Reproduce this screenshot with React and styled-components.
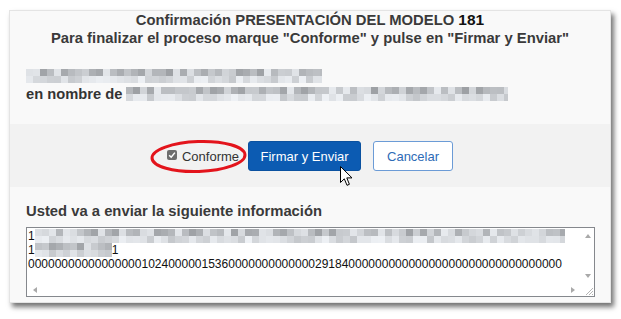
import React from 'react';
import styled, { createGlobalStyle } from 'styled-components';

const GlobalStyle = createGlobalStyle`
  html, body {
    margin: 0;
    padding: 0;
    background: #fff;
  }
  body {
    font-family: "Liberation Sans", Arial, sans-serif;
  }
`;

const Page = styled.div`
  width: 621px;
  height: 319px;
  padding: 10px 0 0 9px;
  box-sizing: border-box;
`;

const Card = styled.div`
  width: 602px;
  height: 293px;
  box-sizing: border-box;
  background: #f9f9f9;
  border: 1px solid #e4e4e4;
  box-shadow: 3px 4px 5px rgba(0, 0, 0, 0.55);
  display: flex;
  flex-direction: column;
`;

const Header = styled.div`
  text-align: center;
  font-size: 14.8px;
  font-weight: 700;
  line-height: 18px;
  color: #3a3a3a;
`;

const Number = styled.span`
  color: #111;
  font-size: 15.5px;
`;

const Identity = styled.div`
  padding: 20px 16px 21px;
`;

const Line = styled.div`
  display: flex;
  align-items: center;
  height: 18px;
  font-size: 14.7px;
  font-weight: 700;
  color: #333;
  white-space: nowrap;
`;

const PixelBlock = styled.div`
  display: flex;
  flex-direction: column;
  flex: none;
  overflow: hidden;
`;

const PixelRow = styled.div`
  display: flex;
  height: ${(p) => p.$cell}px;
`;

const Cell = styled.span`
  display: block;
  width: ${(p) => p.$cell}px;
  height: 100%;
  flex: none;
`;

const Band = styled.div`
  background: #f2f2f2;
  padding: 17px 0 16px;
  display: flex;
  justify-content: center;
  align-items: center;
`;

const ConformeLabel = styled.label`
  position: relative;
  display: flex;
  align-items: center;
  height: 30px;
  margin-right: 9px;
  font-size: 13px;
  color: #333;
`;

const CheckBox = styled.span`
  width: 10px;
  height: 10px;
  border-radius: 2px;
  background: #6d6d6d;
  margin: 0 5px 3px 0;
  display: flex;
  align-items: center;
  justify-content: center;
`;

const Ring = styled.svg`
  position: absolute;
  left: -17px;
  top: -1px;
  overflow: visible;
  pointer-events: none;
`;

const Button = styled.button`
  position: relative;
  height: 30px;
  width: ${(p) => p.$w}px;
  box-sizing: border-box;
  border-radius: 3px;
  font-family: "Liberation Sans", Arial, sans-serif;
  font-size: 13px;
  padding: 0;
  margin-right: ${(p) => p.$mr || 0}px;
  background: ${(p) => (p.$primary ? '#0c5bb2' : '#fff')};
  color: ${(p) => (p.$primary ? '#fff' : '#2e6bb6')};
  border: 1px solid ${(p) => (p.$primary ? '#0a51a0' : '#6b9bd6')};
`;

const Cursor = styled.svg`
  position: absolute;
  left: 91px;
  top: 24px;
  overflow: visible;
`;

const Info = styled.div`
  padding: 15px 16px 0;
`;

const InfoTitle = styled.div`
  font-size: 14.8px;
  font-weight: 700;
  line-height: 18px;
  color: #3a3a3a;
`;

const TextBox = styled.div`
  margin-top: 7px;
  width: 569px;
  height: 70px;
  box-sizing: border-box;
  border: 1px solid #85888d;
  background: #fff;
  display: grid;
  grid-template-columns: 1fr 13px;
  grid-template-rows: 1fr 13px;
`;

const TextContent = styled.div`
  padding: 1px 0 0 1px;
  overflow: hidden;
  font-size: 12px;
  line-height: 14px;
  color: #111;
  white-space: nowrap;
`;

const TextLine = styled.div`
  display: flex;
  align-items: center;
  height: 14px;
`;

const VScroll = styled.div`
  display: flex;
  flex-direction: column;
  justify-content: space-between;
  align-items: center;
  padding: 6px 0 5px;
`;

const HScroll = styled.div`
  display: flex;
  justify-content: space-between;
  align-items: center;
  padding: 0 6px 0 6px;
`;

const Arrow = styled.span`
  width: 0;
  height: 0;
  border: 3px solid transparent;
  ${(p) => p.$dir === 'up' && 'border-bottom: 4px solid #a9a9a9; border-top-width: 0;'}
  ${(p) => p.$dir === 'down' && 'border-top: 4px solid #a9a9a9; border-bottom-width: 0;'}
  ${(p) => p.$dir === 'left' && 'border-right: 4px solid #a9a9a9; border-left-width: 0;'}
  ${(p) => p.$dir === 'right' && 'border-left: 4px solid #a9a9a9; border-right-width: 0;'}
`;

const Grip = styled.div`
  display: flex;
  align-items: flex-end;
  justify-content: flex-end;
`;

// deterministic grey blocks standing in for the pixelated private data
const makeCells = (seed, cols, rows) => {
  let s = seed;
  const rnd = () => {
    s = (s * 9301 + 49297) % 233280;
    return s / 233280;
  };
  const out = [];
  for (let r = 0; r < rows; r++) {
    const row = [];
    for (let c = 0; c < cols; c++) {
      const v = rnd();
      const base = r === 0 ? 160 + v * 75 : 200 + v * 42;
      const g = Math.round(base);
      row.push(`rgb(${g - 4}, ${g - 1}, ${g + 3})`);
    }
    out.push(row);
  }
  return out;
};

const Pixelated = ({ width, seed, cell = 7, rows = 2 }) => {
  const cells = makeCells(seed, Math.ceil(width / cell), rows);
  return (
    <PixelBlock style={{ width }}>
      {cells.map((row, i) => (
        <PixelRow key={i} $cell={cell}>
          {row.map((c, j) => (
            <Cell key={j} $cell={cell} style={{ background: c }} />
          ))}
        </PixelRow>
      ))}
    </PixelBlock>
  );
};

const digits =
  '0'.repeat(17) + '1024' + '0'.repeat(5) + '1536' + '0'.repeat(13) + '29184' + '0'.repeat(32);

export default function App() {
  return (
    <>
      <GlobalStyle />
      <Page>
        <Card>
          <Header>
            <div>
              Confirmación PRESENTACIÓN DEL MODELO <Number>181</Number>
            </div>
            <div>Para finalizar el proceso marque "Conforme" y pulse en "Firmar y Enviar"</div>
          </Header>

          <Identity>
            <Line>
              <Pixelated width={296} seed={17} />
            </Line>
            <Line>
              en nombre de&nbsp;
              <Pixelated width={382} seed={53} />
            </Line>
          </Identity>

          <Band>
            <ConformeLabel>
              <CheckBox>
                <svg width="8" height="8" viewBox="0 0 8 8">
                  <path d="M1.2 4.2 L3.2 6.2 L6.9 1.6" fill="none" stroke="#fff" strokeWidth="1.5" />
                </svg>
              </CheckBox>
              Conforme
              <Ring width="97" height="33">
                <ellipse
                  cx="48.5"
                  cy="16.5"
                  rx="46.5"
                  ry="15"
                  fill="none"
                  stroke="#e3141c"
                  strokeWidth="3"
                  transform="rotate(-2 48.5 16.5)"
                />
              </Ring>
            </ConformeLabel>
            <Button $primary $w={113} $mr={12}>
              Firmar y Enviar
              <Cursor width="13" height="21" viewBox="0 0 13 21">
                <path
                  d="M0.5 0.5 L0.5 16.5 L4.3 12.8 L7 19.3 L9.4 18.3 L6.8 11.9 L12 11.9 Z"
                  fill="#fff"
                  stroke="#000"
                  strokeWidth="1"
                  strokeLinejoin="round"
                />
              </Cursor>
            </Button>
            <Button $w={80}>Cancelar</Button>
          </Band>

          <Info>
            <InfoTitle>Usted va a enviar la siguiente información</InfoTitle>
            <TextBox>
              <TextContent>
                <TextLine>
                  1<Pixelated width={530} seed={91} />
                </TextLine>
                <TextLine>
                  1<Pixelated width={77} seed={7} />1
                </TextLine>
                <TextLine>{digits}</TextLine>
              </TextContent>
              <VScroll>
                <Arrow $dir="up" />
                <Arrow $dir="down" />
              </VScroll>
              <HScroll>
                <Arrow $dir="left" />
                <Arrow $dir="right" />
              </HScroll>
              <Grip>
                <svg width="10" height="10" viewBox="0 0 10 10">
                  <path d="M9 2 L2 9 M9 5 L5 9 M9 8 L8 9" stroke="#b4b4b4" strokeWidth="1" />
                </svg>
              </Grip>
            </TextBox>
          </Info>
        </Card>
      </Page>
    </>
  );
}
